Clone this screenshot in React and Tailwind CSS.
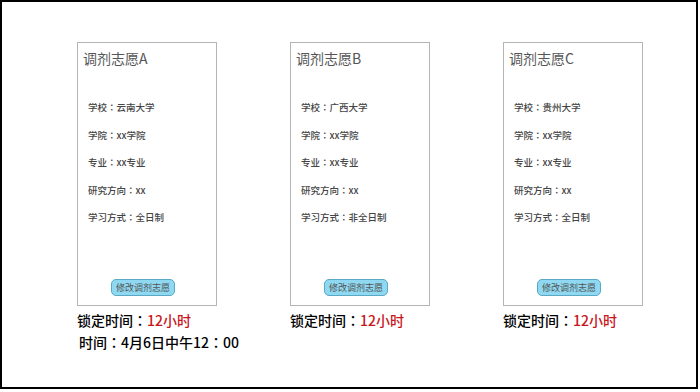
const choices = [
    { label: 'A', school: '云南大学', mode: '全日制', showTime: true },
    { label: 'B', school: '广西大学', mode: '非全日制' },
    { label: 'C', school: '贵州大学', mode: '全日制' },
];

// fullwidth colon drawn centred, as in the mockup
const Colon = () => <span style={{ fontFamily: '"Noto Sans CJK JP", sans-serif' }}>：</span>;

const ChoiceCard = ({ label, school, mode }) => {
    const rows = [
        ['学校', school],
        ['学院', 'xx学院'],
        ['专业', 'xx专业'],
        ['研究方向', 'xx'],
        ['学习方式', mode],
    ];
    return (
        <div className="w-[140px] h-[264px] border border-[#b5b5b5] bg-white flex flex-col">
            <h2 className="pl-[5px] pt-[5px] text-[14px] leading-[20px] text-[#555555]">调剂志愿{label}</h2>
            <div className="pl-[10px] pt-[32px] flex flex-col gap-[13.5px]">
                {rows.map(([k, v]) => (
                    <p key={k} className="text-[9.5px] leading-[14px] text-[#444444] font-medium whitespace-nowrap">
                        {k}<Colon />{v}
                    </p>
                ))}
            </div>
            <div className="mt-auto mb-[9px] flex justify-center pr-[8px]">
                <button className="h-[17px] px-[4px] rounded-[5px] bg-[#8ed8f2] border border-[#5aa9c4] text-[9px] leading-[15px] text-[#555555]">
                    修改调剂志愿
                </button>
            </div>
        </div>
    );
};

export default function App() {
    return (
        <div
            className="w-[698px] h-[389px] border-2 border-black bg-white"
            style={{ fontFamily: '"Noto Sans CJK SC", "Noto Sans", sans-serif' }}
        >
            <div className="flex gap-[73px] pl-[75px] pt-[40px]">
                {choices.map((c) => (
                    <div key={c.label} className="w-[140px] flex flex-col">
                        <ChoiceCard {...c} />
                        <p className="mt-[4px] text-[14px] leading-[20px] font-medium text-black whitespace-nowrap">
                            锁定时间<Colon /><span className="text-[#c8161d]">12小时</span>
                        </p>
                        {c.showTime && (
                            <p className="mt-[2px] pl-[2px] text-[14px] leading-[20px] font-medium text-black whitespace-nowrap">
                                时间<Colon />4月6日中午12<Colon />00
                            </p>
                        )}
                    </div>
                ))}
            </div>
        </div>
    );
}
